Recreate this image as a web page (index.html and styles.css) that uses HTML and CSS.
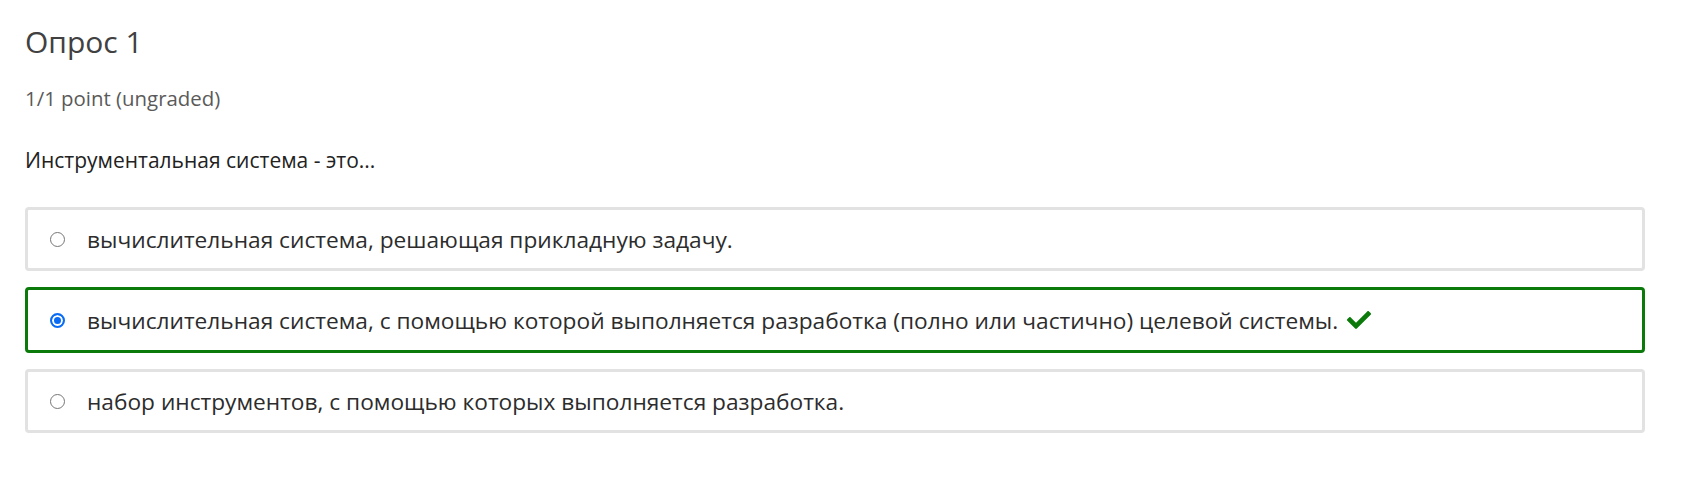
FILE: index.html
```html
<!DOCTYPE html>
<html lang="ru">
<head>
<meta charset="utf-8">
<link rel="stylesheet" href="styles.css">
</head>
<body>
<div class="problem">
  <h2 class="title">Опрос 1</h2>
  <div class="points">1/1 point (ungraded)</div>
  <p class="question">Инструментальная система - это...</p>
  <div class="choices">
    <label class="choice">
      <input type="radio" name="q1" class="radio">
      <span class="text">вычислительная система, решающая прикладную задачу.</span>
    </label>
    <label class="choice correct">
      <input type="radio" name="q1" class="radio" checked>
      <span class="text">вычислительная система, с помощью которой выполняется разработка (полно или частично) целевой системы.</span>
      <svg class="check" viewBox="0 64 512 384" width="24" height="18" aria-hidden="true"><path fill="#0b7a0b" d="M173.9 439.4L7.5 273c-10-10-10-26.2 0-36.2l36.2-36.2c10-10 26.2-10 36.2 0L192 312.7 432.1 72.6c10-10 26.2-10 36.2 0l36.2 36.2c10 10 10 26.2 0 36.2L210.1 439.4c-10 10-26.2 10-36.2 0z"/></svg>
    </label>
    <label class="choice">
      <input type="radio" name="q1" class="radio">
      <span class="text">набор инструментов, с помощью которых выполняется разработка.</span>
    </label>
  </div>
</div>
</body>
</html>
```

FILE: styles.css
```css
html, body {
  margin: 0;
  padding: 0;
  background: #ffffff;
}
body {
  font-family: "Open Sans", "Noto Sans", sans-serif;
  color: #313131;
}
.problem {
  padding: 22px 36px 0 25px;
}
.title {
  margin: 0;
  font-size: 30px;
  font-weight: 400;
  color: #414141;
  line-height: 40px;
}
.points {
  margin-top: 25px;
  font-size: 20.4px;
  color: #5a5a5a;
  line-height: 22px;
}
.question {
  margin: 36px 0 0 0;
  font-size: 21px;
  line-height: 30px;
  color: #222;
}
.choices {
  margin-top: 32px;
  display: flex;
  flex-direction: column;
  gap: 16px;
}
.choice {
  display: flex;
  align-items: center;
  height: 64px;
  box-sizing: border-box;
  border: 3px solid #e2e2e2;
  border-radius: 4px;
  padding-left: 22px;
  font-size: 22.7px;
  color: #2c2c2c;
}
.choice.correct {
  border: 3px solid #0b7a0b;
  height: 66px;
}
.radio {
  appearance: none;
  -webkit-appearance: none;
  flex: none;
  box-sizing: border-box;
  margin: 0 22px 0 0;
  width: 15px;
  height: 15px;
  border: 1px solid #767676;
  border-radius: 50%;
  background: #fff;
}
.radio:checked {
  border: 2px solid #0a6cf5;
  background: #0a6cf5;
  box-shadow: inset 0 0 0 2px #fff;
}
.check {
  margin-left: 9px;
  flex: none;
}
```
